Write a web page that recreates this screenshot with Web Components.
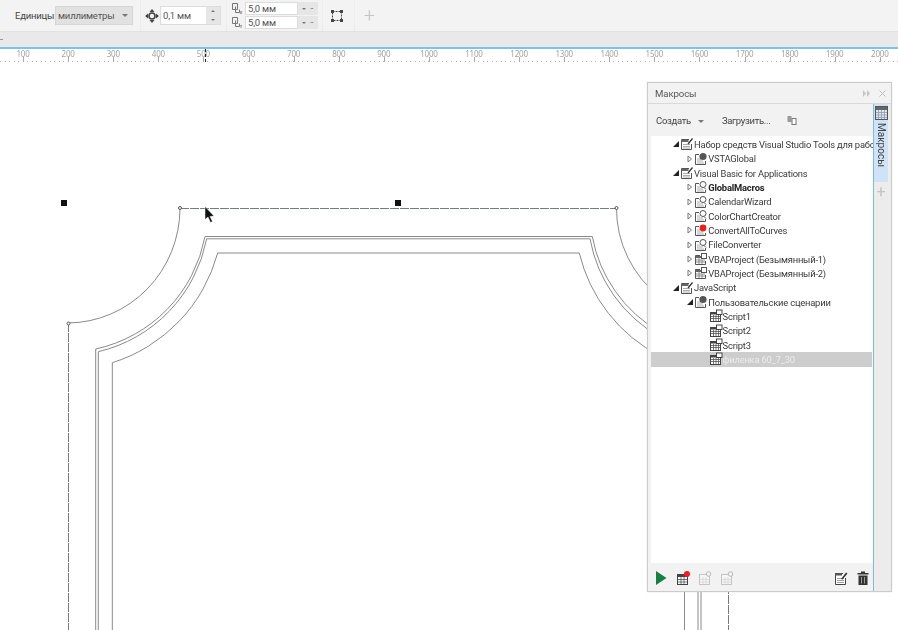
<!DOCTYPE html>
<html lang="ru">
<head>
<meta charset="utf-8">
<title>Макросы</title>
<style>
  html, body { margin: 0; height: 100%; background: #fff; overflow: hidden; }
  body { font-family: Roboto, "Noto Sans", sans-serif; }
</style>
</head>
<body>
<cad-window></cad-window>
<script>
const ICONS = {
  book: `<svg width="14" height="14" viewBox="0 0 14 14"><path d="M9 2.500H1.500v10h10V7" fill="#fff" stroke="#555"/><path d="M1.500 3h7v2h-7z" fill="#666"/><path d="M3 7.500h7M3 9.500h7M3 11h7" stroke="#999" stroke-width=".8"/><path d="M7.500 6.500 12 1l1 1-4.500 5.500z" fill="#333"/></svg>`,
  globe: `<svg width="14" height="14" viewBox="0 0 14 14"><path d="M5 2.500H1.500v10h10V9" fill="#fff" stroke="#555"/><path d="M3 7h4M3 9h6M3 11h7" stroke="#999" stroke-width=".8"/><circle cx="9" cy="4.500" r="3.600" fill="#555"/></svg>`,
  lens: `<svg width="14" height="14" viewBox="0 0 14 14"><path d="M5 3.500H1.500v9h10V10" fill="#fff" stroke="#555"/><path d="M3 7h3M3 9h6M3 11h7" stroke="#999" stroke-width=".8"/><circle cx="9" cy="4.500" r="3" fill="#fff" stroke="#555"/><path d="M10 7.500 12 9.500" stroke="#555"/></svg>`,
  red: `<svg width="14" height="14" viewBox="0 0 14 14"><path d="M5 3.500H1.500v9h10V10" fill="#fff" stroke="#555"/><path d="M3 7h3M3 9h6M3 11h7" stroke="#999" stroke-width=".8"/><circle cx="9" cy="5" r="3.400" fill="#e3241b"/></svg>`,
  project: `<svg width="14" height="14" viewBox="0 0 14 14"><path d="M6 3.500H1.500v9h10V9" fill="#fff" stroke="#555"/><rect x="2" y="4" width="5" height="2" fill="#666"/><path d="M2 8h9M2 10h9M5 6v6M8 8v4" stroke="#777" stroke-width=".8"/><rect x="7.500" y="1.500" width="5" height="5" fill="#fff" stroke="#555"/></svg>`,
  script: `<svg width="14" height="14" viewBox="0 0 14 14"><rect x="1.500" y="3.500" width="10" height="9" fill="#fff" stroke="#444"/><rect x="1" y="3" width="7" height="2.500" fill="#444"/><path d="M2 7.500h9M2 9.500h9M4.500 6v6M7 6v6M9.500 6v6" stroke="#555" stroke-width=".8"/><rect x="7.500" y="1" width="5.500" height="4.500" fill="#fff" stroke="#444"/></svg>`
};

class ToolBar extends HTMLElement {
  constructor() {
    super();
    this.attachShadow({ mode: "open" });
  }

  connectedCallback() {
    this.shadowRoot.innerHTML = /* html */`
    <style>
      :host { display: flex; align-items: center; height: 31px; box-sizing: border-box; background: #f3f3f3; padding-left: 15px; font-size: 9.500px; letter-spacing: -.2px; color: #444; }
      .sep { width: 1px; height: 31px; background: #ececec; }
      .label { width: 40px; }
      .select { width: 78px; height: 19px; box-sizing: border-box; background: #e1e1e1; border: 1px solid #d6d6d6; display: flex; align-items: center; padding: 0 4px 0 2px; justify-content: space-between; color: #555; }
      .arr { width: 0; height: 0; border: 3px solid transparent; border-top: 3px solid #777; border-bottom: 0; }
      .field { background: #fff; border: 1px solid #dcdcdc; box-sizing: border-box; display: flex; align-items: center; padding-left: 2px; color: #555; }
      .spin { background: #e6e6e6; display: flex; flex-direction: column; align-items: center; justify-content: space-around; align-self: stretch; font-size: 0; }
      .up, .down { width: 0; height: 0; border: 2px solid transparent; }
      .up { border-bottom: 2px solid #777; border-top: 0; }
      .down { border-top: 2px solid #777; border-bottom: 0; }
      .move { margin: 0 1px 0 4px; display: flex; }
      .dup { display: grid; grid-template-columns: 13px 53px 20px; grid-auto-rows: 13px; gap: 1px 0; align-items: center; }
      .dup svg { display: block; }
      .pair { background: #e6e6e6; height: 13px; display: flex; align-items: center; justify-content: space-around; padding: 0 2px; }
      .big { color: #c4c4c4; font-size: 19px; font-weight: 300; line-height: 1; }
    </style>
    <span class="label">Единицы:</span>
    <div class="select">миллиметры<span class="arr"></span></div>
    <span class="sep" style="margin-left:7px"></span>
    <span class="move"><svg width="14" height="14" viewBox="0 0 14 14"><path d="M7 0 9.500 3h-5zM7 14l2.500-3h-5zM0 7l3-2.500v5zM14 7l-3-2.500v5z" fill="#444"/><circle cx="7" cy="7" r="3" fill="none" stroke="#444" stroke-width="1.600"/></svg></span>
    <div class="field" style="width:61px;height:19px;justify-content:space-between">0,1 мм<span class="spin" style="width:14px"><span class="up"></span><span class="down"></span></span></div>
    <span class="sep" style="margin-left:5px;margin-right:5px"></span>
    <div class="dup">
      <svg width="13" height="13" viewBox="0 0 13 13"><path d="M.5 1.500h5v6h-5zM3.500 4.500v6h4v-3" fill="none" stroke="#777"/><path d="M8 9l2 3M10 9l-2 3" stroke="#777" stroke-width=".7"/></svg>
      <div class="field" style="height:13px">5,0 мм</div>
      <div class="pair"><span class="down"></span><span class="down" style="border-width:1px 2px 0"></span></div>
      <svg width="13" height="13" viewBox="0 0 13 13"><path d="M.5 1.500h5v6h-5zM3.500 4.500v6h4v-3" fill="none" stroke="#777"/><path d="M8 9l1 1.500L10 9M9 10.500V12" fill="none" stroke="#777" stroke-width=".7"/></svg>
      <div class="field" style="height:13px">5,0 мм</div>
      <div class="pair"><span class="down"></span><span class="down" style="border-width:1px 2px 0"></span></div>
    </div>
    <span class="sep" style="margin-left:4px"></span>
    <span style="display:flex;margin-left:7px"><svg width="14" height="14" viewBox="0 0 14 14"><rect x="2.500" y="2.500" width="9" height="9" fill="none" stroke="#444" stroke-dasharray="2 1"/><path d="M1 1h3v3H1zM10 1h3v3h-3zM1 10h3v3H1zM10 10h3v3h-3z" fill="#444"/></svg></span>
    <span class="sep" style="margin-left:10px"></span>
    <span class="big" style="margin-left:9px">+</span>`;
  }
}
customElements.define("tool-bar", ToolBar);

class RulerBar extends HTMLElement {
  constructor() {
    super();
    this.attachShadow({ mode: "open" });
  }

  connectedCallback() {
    let cells = "";
    for (let n = 100; n <= 2000; n += 100) cells += `<span class="cell">${n}</span>`;
    this.shadowRoot.innerHTML = /* html */`
    <style>
      :host { display: flex; position: relative; height: 14px; padding-left: .5px; background: #fff repeating-linear-gradient(90deg, #b8b8b8 0 1px, transparent 1px 4.510px) 0 12px / 100% 1px no-repeat; font: 8px "Noto Sans", sans-serif; color: #a2a2a2; }
      .cell { flex: 0 0 45.100px; text-align: center; line-height: 10px; position: relative; letter-spacing: -.2px; }
      .cell::after { content: ""; position: absolute; left: 50%; top: 8px; width: 1px; height: 5px; background: #aaa; }
      .mark { position: absolute; left: 205px; top: 0; height: 13px; border-left: 1px dashed #222; }
    </style>
    ${cells}<span class="mark"></span>`;
  }
}
customElements.define("ruler-bar", RulerBar);

class TreeRow extends HTMLElement {
  constructor() {
    super();
    this.attachShadow({ mode: "open" });
  }

  connectedCallback() {
    const level = Number(this.getAttribute("level") || 0);
    const state = this.getAttribute("state");
    const tri = state === "open"
      ? `<svg width="6" height="6" viewBox="0 0 6 6"><path d="M6 0v6H0z" fill="#222"/></svg>`
      : state === "closed"
        ? `<svg width="6" height="8" viewBox="0 0 6 8"><path d="M1 1l3.500 3L1 7z" fill="#fff" stroke="#777"/></svg>`
        : "";
    this.shadowRoot.innerHTML = /* html */`
    <style>
      :host { display: flex; align-items: center; height: 14.330px; padding-left: calc(22px + ${level} * 14.300px); white-space: nowrap; color: #3a3a3a; font-size: 9.400px; letter-spacing: -.2px; }
      :host([selected]) { background: #cdcdcd; color: #ececec; }
      :host([bold]) { font-weight: 700; color: #222; }
      .tri { width: 7px; display: flex; align-items: center; flex: none; }
      svg { display: block; flex: none; }
    </style>
    <span class="tri">${tri}</span>${ICONS[this.getAttribute("icon")]}<slot></slot>`;
  }
}
customElements.define("tree-row", TreeRow);

class MacroPanel extends HTMLElement {
  constructor() {
    super();
    this.attachShadow({ mode: "open" });
  }

  connectedCallback() {
    this.shadowRoot.innerHTML = /* html */`
    <style>
      :host { position: absolute; left: 647px; top: 19px; width: 245px; height: 510px; box-sizing: border-box; display: grid; grid-template-rows: 21px 1fr; background: #f2f2f2; border: 1px solid #cbcbcb; box-shadow: 0 0 1px #ccc; font-size: 9.500px; color: #444; }
      .head { display: flex; align-items: center; justify-content: space-between; padding: 0 5px 0 7px; border-bottom: 1px solid #d9d9d9; color: #555; font-size: 9.600px; letter-spacing: -.1px; }
      .ctl { display: flex; gap: 8px; align-items: center; color: #c4c4c4; }
      .body { display: grid; grid-template-columns: 1fr 18px; min-height: 0; }
      .main { display: grid; grid-template-rows: 32px 427px 1fr; min-width: 0; }
      .tools { display: flex; align-items: center; padding: 0 0 0 8px; color: #444; letter-spacing: -.3px; }
      .arr { width: 0; height: 0; border: 3px solid transparent; border-top: 3px solid #777; border-bottom: 0; margin: 2px 18px 0 7px; }
      .tree { background: #fff; margin-left: 3px; padding: 1.300px 1px 0 0; overflow: hidden; }
      .foot { display: flex; align-items: center; padding: 2px 3px 0 8px; gap: 8px; }
      .foot svg { display: block; }
      .side { border-left: 1px solid #78bde8; background: #ececec; display: flex; flex-direction: column; align-items: flex-start; }
      .tab { width: 14px; height: 78px; background: #cfe3f8; display: flex; flex-direction: column; align-items: center; padding-top: 2px; box-sizing: border-box; }
      .tab span { writing-mode: vertical-rl; margin-top: 3px; color: #444; line-height: 14px; font-size: 10px; }
      .plus { width: 14px; text-align: center; color: #c4c4c4; font-size: 16px; line-height: 1; margin-top: 2px; }
    </style>
    <div class="head">Макросы
      <span class="ctl">
        <svg width="8" height="7" viewBox="0 0 8 7"><path d="M0 0l3 3.500L0 7zM4 0l3 3.500L4 7z" fill="#c4c4c4"/></svg>
        <svg width="7" height="7" viewBox="0 0 7 7"><path d="M.5.500l6 6M6.500.500l-6 6" stroke="#bdbdbd"/></svg>
      </span>
    </div>
    <div class="body">
      <div class="main">
        <div class="tools">
          Создать<span class="arr"></span>Загрузить...
          <svg style="margin-left:17px" width="10" height="10" viewBox="0 0 10 10"><path d="M.5 1h4v6h-4z" fill="#999"/><rect x="5" y="3.500" width="4" height="6" fill="#fff" stroke="#777"/></svg>
        </div>
        <div class="tree"><slot></slot></div>
        <div class="foot">
          <svg width="11" height="14" viewBox="0 0 11 14"><path d="M0 0l10.500 7L0 14z" fill="#15803f"/></svg>
          <svg style="margin-left:1px" width="14" height="14" viewBox="0 0 14 14"><rect x="1.500" y="3.500" width="10" height="10" fill="#fff" stroke="#444"/><rect x="1" y="3" width="11" height="3" fill="#444"/><path d="M2 8.500h9M2 11h9M5 6v7M8 6v7" stroke="#555" stroke-width=".8"/><circle cx="11" cy="3" r="3" fill="#ee1c25"/></svg>
          <svg width="14" height="14" viewBox="0 0 14 14"><rect x="1.500" y="3.500" width="10" height="10" fill="#f6f6f6" stroke="#c5c5c5"/><path d="M2 8.500h9M2 11h9M5 6v7M8 6v7" stroke="#d5d5d5" stroke-width=".8"/><circle cx="10.500" cy="3" r="2.300" fill="#f2f2f2" stroke="#bbb"/></svg>
          <svg width="14" height="14" viewBox="0 0 14 14"><rect x="1.500" y="3.500" width="10" height="10" fill="#f6f6f6" stroke="#c5c5c5"/><path d="M2 8.500h9M2 11h9M5 6v7M8 6v7" stroke="#d5d5d5" stroke-width=".8"/><circle cx="10.500" cy="3" r="2.300" fill="#f2f2f2" stroke="#bbb"/></svg>
          <svg style="margin-left:auto" width="14" height="14" viewBox="0 0 14 14"><path d="M9 2.500H1.500v11h10V7" fill="#fff" stroke="#444"/><rect x="1" y="2" width="7" height="2.500" fill="#555"/><path d="M3 7.500h7M3 9.500h7M3 11.500h7" stroke="#888" stroke-width=".8"/><path d="M7 8 12 1.500l1.500 1L8.500 8.500z" fill="#333"/></svg>
          <svg style="margin-left:1px;margin-right:1px" width="12" height="14" viewBox="0 0 12 14"><path d="M4 .500h4v1.500h3.500v1.500H.500V2H4zM1.500 4.500h9V14h-9z" fill="#333"/><path d="M4.500 6v6.500M7.500 6v6.500" stroke="#999"/></svg>
        </div>
      </div>
      <div class="side">
        <div class="tab">
          <svg width="13" height="14" viewBox="0 0 13 14"><rect x=".5" y=".5" width="12" height="13" fill="#dfe9f5" stroke="#555"/><rect x="1" y="1" width="11" height="3" fill="#666"/><path d="M1 6.500h11M1 9h11M1 11.500h11M3.500 4v9M6.500 4v9M9.500 4v9" stroke="#8e9bab" stroke-width=".8"/></svg>
          <span>Макросы</span>
        </div>
        <div class="plus">+</div>
      </div>
    </div>`;
  }
}
customElements.define("macro-panel", MacroPanel);

class DrawCanvas extends HTMLElement {
  constructor() {
    super();
    this.attachShadow({ mode: "open" });
  }

  connectedCallback() {
    this.shadowRoot.innerHTML = /* html */`
    <style>
      :host { display: block; position: relative; flex: 1; background: #fff; overflow: hidden; }
      svg { display: block; }
    </style>
    <svg width="898" height="567" viewBox="0 63 898 567">
      <g fill="none" stroke="#8a8a8a" stroke-width="1">
        <path d="M95.700 630V349A142 142 0 0 0 205 236.500H592.300A139 139 0 0 0 660 332"/>
        <path d="M98.300 630V351.700A144 144 0 0 0 206.700 238.800H590A142 142 0 0 0 660 337"/>
        <path d="M112.300 630V362.700A158 158 0 0 0 217.700 253H579.300A157 157 0 0 0 660 356"/>
        <path d="M684.500 585V630M698 585V630M701 585V630"/>
        <path d="M180 208A113 115 0 0 1 68 323M616.500 208A112 112 0 0 0 660 297"/>
        <path d="M180 208.500H616.500M68.500 323V630M728.500 585V630" stroke="#757c82" stroke-dasharray="9 1"/>
      </g>
      <rect x="61" y="200" width="6" height="6" fill="#111"/>
      <rect x="395" y="200" width="6" height="6" fill="#111"/>
      <g fill="#fff" stroke="#555">
        <circle cx="180" cy="208" r="1.500"/>
        <circle cx="616.500" cy="208" r="1.500"/>
        <circle cx="68.500" cy="323.500" r="1.500"/>
      </g>
      <path d="M205 206.500V219.500L208 217 210.500 222.500 212.500 221.500 210 216.500 214 216Z" fill="#111" stroke="#fff" stroke-width=".5"/>
    </svg>
    <slot></slot>`;
  }
}
customElements.define("draw-canvas", DrawCanvas);

class CadWindow extends HTMLElement {
  constructor() {
    super();
    this.attachShadow({ mode: "open" });
  }

  connectedCallback() {
    this.shadowRoot.innerHTML = /* html */`
    <style>
      :host { display: flex; flex-direction: column; height: 630px; width: 898px; filter: blur(.45px); }
      .strip { height: 18px; box-sizing: border-box; background: #e9e9e9; border-top: 1px solid #e2e2e2; border-bottom: 2px solid #7fc1ea; display: flex; align-items: center; }
      .strip span { width: 3px; height: 1px; background: #999; }
    </style>
    <tool-bar></tool-bar>
    <div class="strip"><span></span></div>
    <ruler-bar></ruler-bar>
    <draw-canvas>
      <macro-panel>
        <tree-row level="0" state="open" icon="book">Набор средств Visual Studio Tools для рабо</tree-row>
        <tree-row level="1" state="closed" icon="globe">VSTAGlobal</tree-row>
        <tree-row level="0" state="open" icon="book">Visual Basic for Applications</tree-row>
        <tree-row level="1" state="closed" icon="lens" bold>GlobalMacros</tree-row>
        <tree-row level="1" state="closed" icon="lens">CalendarWizard</tree-row>
        <tree-row level="1" state="closed" icon="lens">ColorChartCreator</tree-row>
        <tree-row level="1" state="closed" icon="red">ConvertAllToCurves</tree-row>
        <tree-row level="1" state="closed" icon="lens">FileConverter</tree-row>
        <tree-row level="1" state="closed" icon="project">VBAProject (Безымянный-1)</tree-row>
        <tree-row level="1" state="closed" icon="project">VBAProject (Безымянный-2)</tree-row>
        <tree-row level="0" state="open" icon="book">JavaScript</tree-row>
        <tree-row level="1" state="open" icon="globe">Пользовательские сценарии</tree-row>
        <tree-row level="2" icon="script">Script1</tree-row>
        <tree-row level="2" icon="script">Script2</tree-row>
        <tree-row level="2" icon="script">Script3</tree-row>
        <tree-row level="2" icon="script" selected>филенка 60_7_30</tree-row>
      </macro-panel>
    </draw-canvas>`;
  }
}
customElements.define("cad-window", CadWindow);
</script>
</body>
</html>
